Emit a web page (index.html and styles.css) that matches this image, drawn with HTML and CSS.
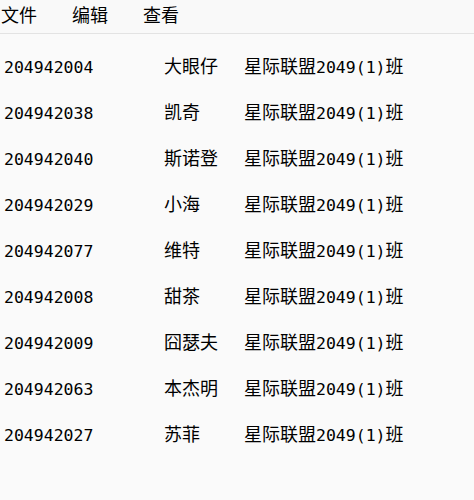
FILE: index.html
```html
<!DOCTYPE html>
<html lang="zh-CN">
<head>
  <meta charset="UTF-8" />
  <meta name="viewport" content="width=device-width, initial-scale=1" />
  <title>学生名单</title>
  <link rel="stylesheet" href="styles.css">
</head>
<body>
  <!-- Barra de menu -->
  <div class="menubar">
    <span class="menu-item">文件</span>
    <span class="menu-item">编辑</span>
    <span class="menu-item">查看</span>
  </div>

  <div class="lista">
    <div class="linha"><span class="num">204942004</span><span>大眼仔</span><span>星际联盟<span class="num">2049(1)</span>班</span></div>
    <div class="linha"><span class="num">204942038</span><span>凯奇</span><span>星际联盟<span class="num">2049(1)</span>班</span></div>
    <div class="linha"><span class="num">204942040</span><span>斯诺登</span><span>星际联盟<span class="num">2049(1)</span>班</span></div>
    <div class="linha"><span class="num">204942029</span><span>小海</span><span>星际联盟<span class="num">2049(1)</span>班</span></div>
    <div class="linha"><span class="num">204942077</span><span>维特</span><span>星际联盟<span class="num">2049(1)</span>班</span></div>
    <div class="linha"><span class="num">204942008</span><span>甜茶</span><span>星际联盟<span class="num">2049(1)</span>班</span></div>
    <div class="linha"><span class="num">204942009</span><span>囧瑟夫</span><span>星际联盟<span class="num">2049(1)</span>班</span></div>
    <div class="linha"><span class="num">204942063</span><span>本杰明</span><span>星际联盟<span class="num">2049(1)</span>班</span></div>
    <div class="linha"><span class="num">204942027</span><span>苏菲</span><span>星际联盟<span class="num">2049(1)</span>班</span></div>
  </div>
</body>
</html>
```

FILE: styles.css
```css
/* Reset e estilo básico */
body, html {
  margin: 0;
  padding: 0;
  height: 100%;
  background-color: #fafafa;
  color: #000;
  font-family: "Noto Sans CJK SC", "Noto Sans", sans-serif;
  font-size: 18px;
}

.menubar {
  display: flex;
  gap: 35px;
  height: 33px;
  padding-left: 1px;
  background-color: #f9f9f9;
  border-bottom: 1px solid #e3e3e3;
  line-height: 29px;
}

.lista {
  padding-top: 8px;
  padding-left: 4px;
}

.linha {
  display: grid;
  grid-template-columns: 160px 80px auto;
  align-items: baseline;
  height: 46px;
  line-height: 46px;
}

.num {
  font-family: "DejaVu Sans Mono", monospace;
  font-size: 16.5px;
}
```
